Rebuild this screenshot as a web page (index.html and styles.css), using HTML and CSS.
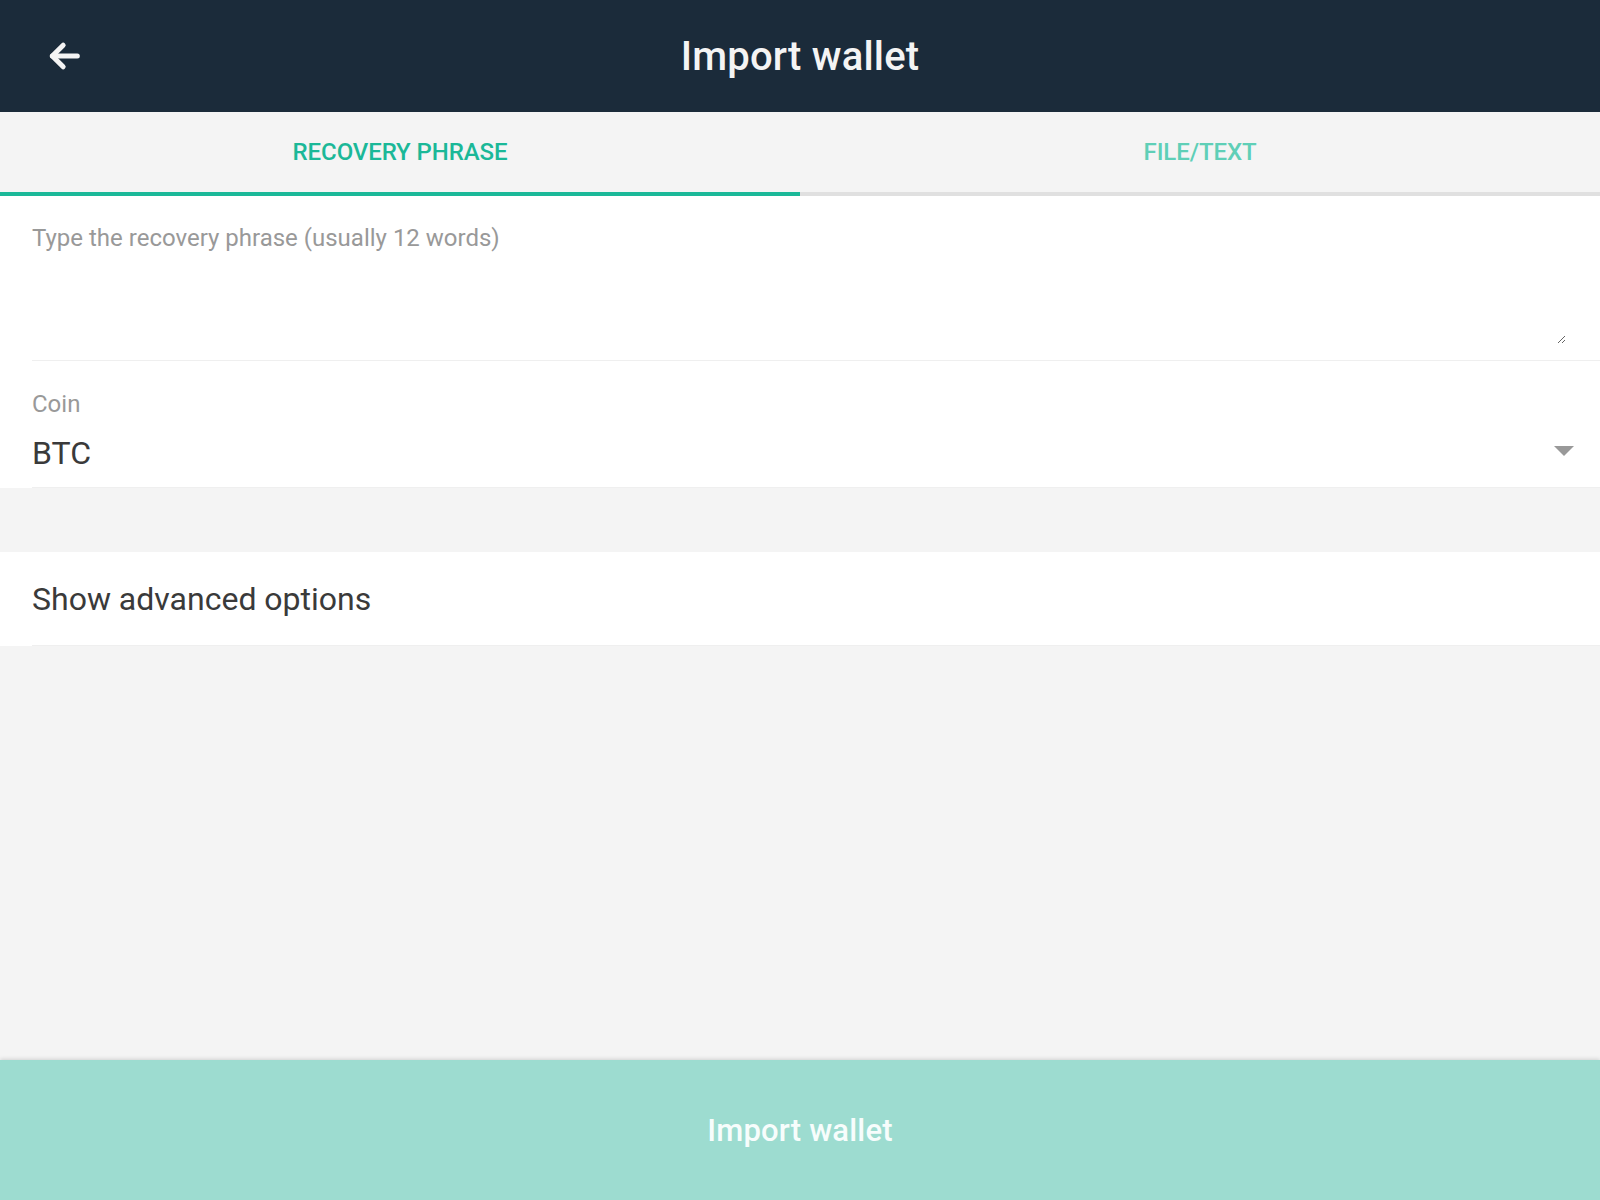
FILE: index.html
```html
<!DOCTYPE html>
<html lang="en">
<head>
<meta charset="utf-8">
<title>Import wallet</title>
<link rel="stylesheet" href="styles.css">
</head>
<body>
<div class="app">
  <header class="toolbar">
    <div class="toolbar-start">
      <button class="back-btn" aria-label="Back">
        <svg width="40" height="40" viewBox="40 36 48 40" fill="none" stroke="#f4f4f4" stroke-width="6" stroke-linecap="round" stroke-linejoin="round">
          <path d="M80 56H50"/>
          <path d="M63 43L50 56L63 69"/>
        </svg>
      </button>
    </div>
    <h1 class="title">Import wallet</h1>
    <div class="toolbar-end"></div>
  </header>

  <nav class="tabs">
    <div class="tab tab-active">RECOVERY PHRASE</div>
    <div class="tab tab-inactive">FILE/TEXT</div>
  </nav>

  <main class="content">
    <div class="list">
      <div class="item">
        <div class="item-inner item-textarea">
          <textarea class="phrase" placeholder="Type the recovery phrase (usually 12 words)"></textarea>
        </div>
      </div>
      <div class="item">
        <div class="item-inner item-select">
          <div class="select-text">
            <div class="label">Coin</div>
            <div class="value">BTC</div>
          </div>
          <div class="select-icon"></div>
        </div>
      </div>
    </div>

    <div class="list list-advanced">
      <div class="item">
        <div class="item-inner item-toggle">
          <span class="toggle-text">Show advanced options</span>
        </div>
      </div>
    </div>
  </main>

  <footer class="footer">
    <button class="import-btn">Import wallet</button>
  </footer>
</div>
</body>
</html>
```

FILE: styles.css
```css
* {
  box-sizing: border-box;
}

html, body {
  margin: 0;
  padding: 0;
  height: 100%;
}

body {
  font-family: Roboto, "Liberation Sans", Arial, sans-serif;
  background: #f4f4f4;
  color: #3a3a3a;
}

.app {
  display: flex;
  flex-direction: column;
  height: 100vh;
}

.toolbar {
  height: 112px;
  flex: none;
  background: #1b2b3a;
  display: grid;
  grid-template-columns: 1fr auto 1fr;
  align-items: center;
}

.toolbar-start {
  display: flex;
  align-items: center;
  padding-left: 44px;
}

.back-btn {
  background: none;
  border: none;
  padding: 0;
  width: 40px;
  height: 40px;
  display: flex;
  align-items: center;
  justify-content: center;
  cursor: pointer;
}

.title {
  margin: 0;
  font-size: 40px;
  font-weight: 500;
  color: #f4f4f4;
  letter-spacing: 0.2px;
}

.tabs {
  flex: none;
  display: flex;
  height: 84px;
  background: #f4f4f4;
}

.tab {
  flex: 1;
  display: flex;
  align-items: center;
  justify-content: center;
  font-size: 24px;
  font-weight: 500;
  letter-spacing: -0.1px;
}

.tab-active {
  color: #1bb898;
  border-bottom: 4px solid #1bb898;
}

.tab-inactive {
  color: #5fcfb7;
  border-bottom: 4px solid #e0e0e0;
}

.content {
  flex: 1;
  display: flex;
  flex-direction: column;
  background: #f4f4f4;
}

.list {
  background: #fff;
}

.list-advanced {
  margin-top: 64px;
}

.item {
  padding-left: 32px;
  background: #fff;
}

.item-inner {
  border-bottom: 1px solid #efefef;
}

.item-textarea {
  height: 165px;
  padding-top: 12px;
  padding-right: 34px;
}

.phrase {
  display: block;
  width: 100%;
  height: 136px;
  border: none;
  outline: none;
  margin: 0;
  padding: 14px 0 0 0;
  font-family: Roboto, "Liberation Sans", Arial, sans-serif;
  font-size: 24px;
  line-height: 32px;
  color: #333;
  background: transparent;
}

.phrase::placeholder {
  color: #999;
}

.item-select {
  display: flex;
  align-items: center;
  padding-top: 29px;
  padding-bottom: 14px;
  padding-right: 26px;
}

.select-text {
  flex: 1;
}

.label {
  font-size: 24px;
  line-height: 28px;
  color: #999;
  margin-bottom: 15px;
}

.value {
  font-size: 32px;
  line-height: 40px;
  color: #3a3a3a;
}

.select-icon {
  width: 0;
  height: 0;
  border-left: 10px solid transparent;
  border-right: 10px solid transparent;
  border-top: 10px solid #999;
  margin-top: 38px;
}

.item-toggle {
  padding-top: 27px;
  padding-bottom: 26px;
}

.toggle-text {
  font-size: 32px;
  line-height: 40px;
  color: #3a3a3a;
}

.footer {
  flex: none;
  height: 140px;
  box-shadow: 0 -1px 4px rgba(0, 0, 0, 0.14);
  position: relative;
}

.import-btn {
  display: block;
  width: 100%;
  height: 100%;
  border: none;
  margin: 0;
  padding: 0;
  background: #9ddcd0;
  color: #f7fdfc;
  font-family: Roboto, "Liberation Sans", Arial, sans-serif;
  font-size: 31px;
  font-weight: 500;
  letter-spacing: 0.2px;
}
```
